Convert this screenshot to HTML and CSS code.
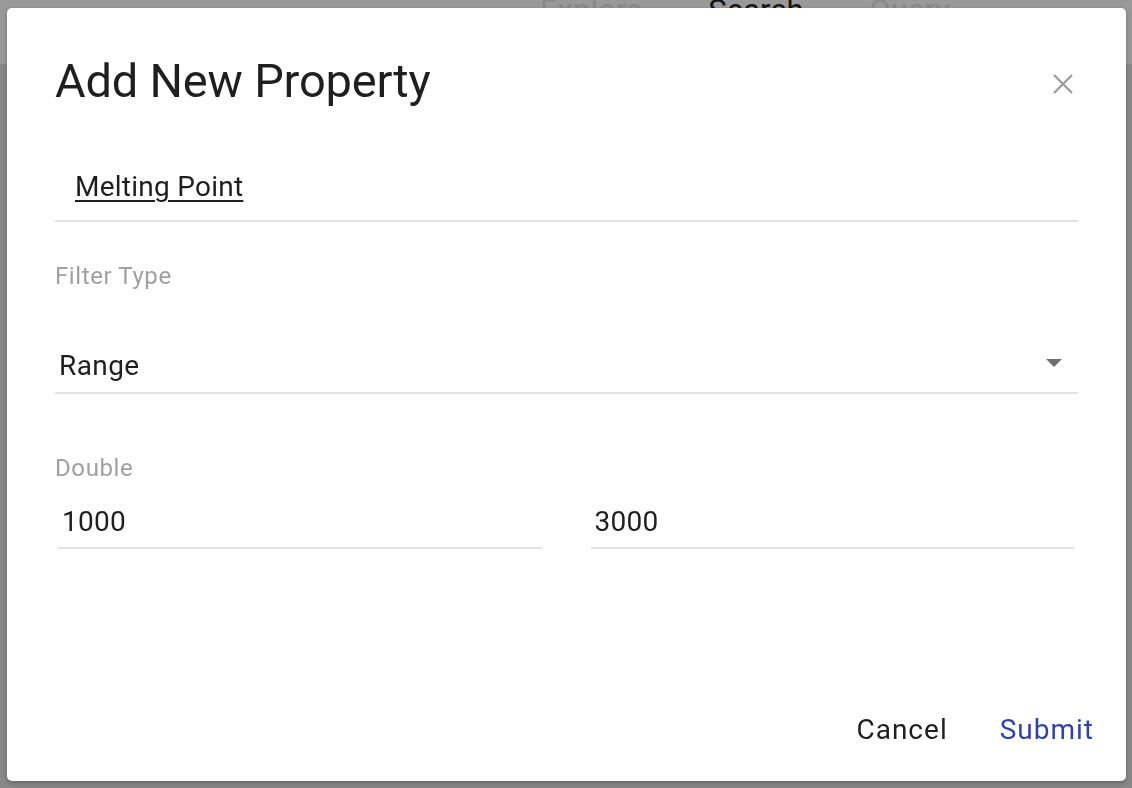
FILE: index.html
```html
<!DOCTYPE html>
<html>
<head>
<meta charset="utf-8">
<link rel="stylesheet" href="styles.css">
</head>
<body>
<header class="appbar">
  <nav class="tabs">
    <span class="tab">Explore</span>
    <span class="tab active">Search</span>
    <span class="tab">Query</span>
  </nav>
</header>
<main class="content"></main>

<div class="dialog">
  <div class="title-row">
    <h1 class="title">Add New Property</h1>
    <svg class="close" width="20" height="20" viewBox="0 0 20 20"><path d="M1 1L19 19M19 1L1 19" stroke="#9a9a9a" stroke-width="2.2" fill="none"/></svg>
  </div>
  <div class="name-field"><span class="name">Melting Point</span></div>
  <div class="label filter-label">Filter Type</div>
  <div class="select">
    <span class="select-value">Range</span>
    <svg class="arrow" width="16" height="8" viewBox="0 0 16 8"><path d="M0 0H16L8 8Z" fill="#6e6e6e"/></svg>
  </div>
  <div class="label double-label">Double</div>
  <div class="range-row">
    <div class="input">1000</div>
    <div class="input">3000</div>
  </div>
  <div class="actions">
    <button class="btn">Cancel</button>
    <button class="btn primary">Submit</button>
  </div>
</div>
</body>
</html>
```

FILE: styles.css
```css
html, body {
  margin: 0;
  padding: 0;
  height: 100%;
}
body {
  background: #878787;
  font-family: Roboto, "Liberation Sans", Arial, sans-serif;
  overflow: hidden;
}
.appbar {
  height: 64px;
  background: #999999;
  display: flex;
  justify-content: flex-start;
}
.tabs {
  display: flex;
  gap: 66px;
  margin-left: 540px;
  margin-top: -7px;
  font-size: 31px;
  line-height: 36px;
}
.tab {
  color: #888888;
}
.tab.active {
  color: #151515;
}
.dialog {
  position: fixed;
  left: 7px;
  top: 8px;
  width: 1119px;
  height: 773px;
  box-sizing: border-box;
  background: #ffffff;
  border-radius: 5px;
  box-shadow: 0 2px 4px rgba(0,0,0,0.25);
  padding: 45px 48px 31px 48px;
  display: flex;
  flex-direction: column;
  color: #212121;
}
.title-row {
  display: flex;
  align-items: flex-start;
  justify-content: space-between;
}
.title {
  margin: 0;
  font-size: 47px;
  font-weight: 400;
  line-height: 56px;
  color: #1f1f1f;
  letter-spacing: -0.2px;
}
.close {
  margin-top: 21px;
  margin-right: 5px;
}
.name-field {
  margin-top: 58px;
  padding: 0 0 13px 20px;
  border-bottom: 2px solid #e2e2e2;
  line-height: 40px;
  font-size: 28px;
}
.name {
  text-decoration: underline;
  text-decoration-thickness: 2px;
  text-underline-offset: 4px;
  color: #1f1f1f;
  letter-spacing: 0.25px;
}
.label {
  font-size: 24px;
  line-height: 32px;
  color: #a0a0a0;
  letter-spacing: 0.6px;
}
.filter-label {
  margin-top: 38px;
}
.select {
  margin-top: 54px;
  display: flex;
  align-items: center;
  justify-content: space-between;
  padding: 0 16px 6px 4px;
  border-bottom: 2px solid #e2e2e2;
  font-size: 28px;
  line-height: 40px;
}
.select-value {
  color: #1f1f1f;
  letter-spacing: 0.4px;
}
.arrow {
  margin-top: -6px;
}
.double-label {
  margin-top: 58px;
}
.range-row {
  margin-top: 18px;
  padding: 0 4px 0 3px;
  display: grid;
  grid-template-columns: 1fr 1fr;
  column-gap: 49px;
}
.input {
  font-size: 28px;
  line-height: 40px;
  padding: 0 4px 5px 4px;
  border-bottom: 2px solid #e2e2e2;
  color: #1f1f1f;
  letter-spacing: 0.3px;
}
.actions {
  margin-top: auto;
  margin-right: -16px;
  display: flex;
  justify-content: flex-end;
  gap: 52px;
}
.btn {
  border: none;
  background: none;
  padding: 0;
  font-family: inherit;
  font-size: 28px;
  line-height: 40px;
  color: #1f1f1f;
  letter-spacing: 1px;
  cursor: pointer;
}
.btn.primary {
  color: #3242a8;
}
```
